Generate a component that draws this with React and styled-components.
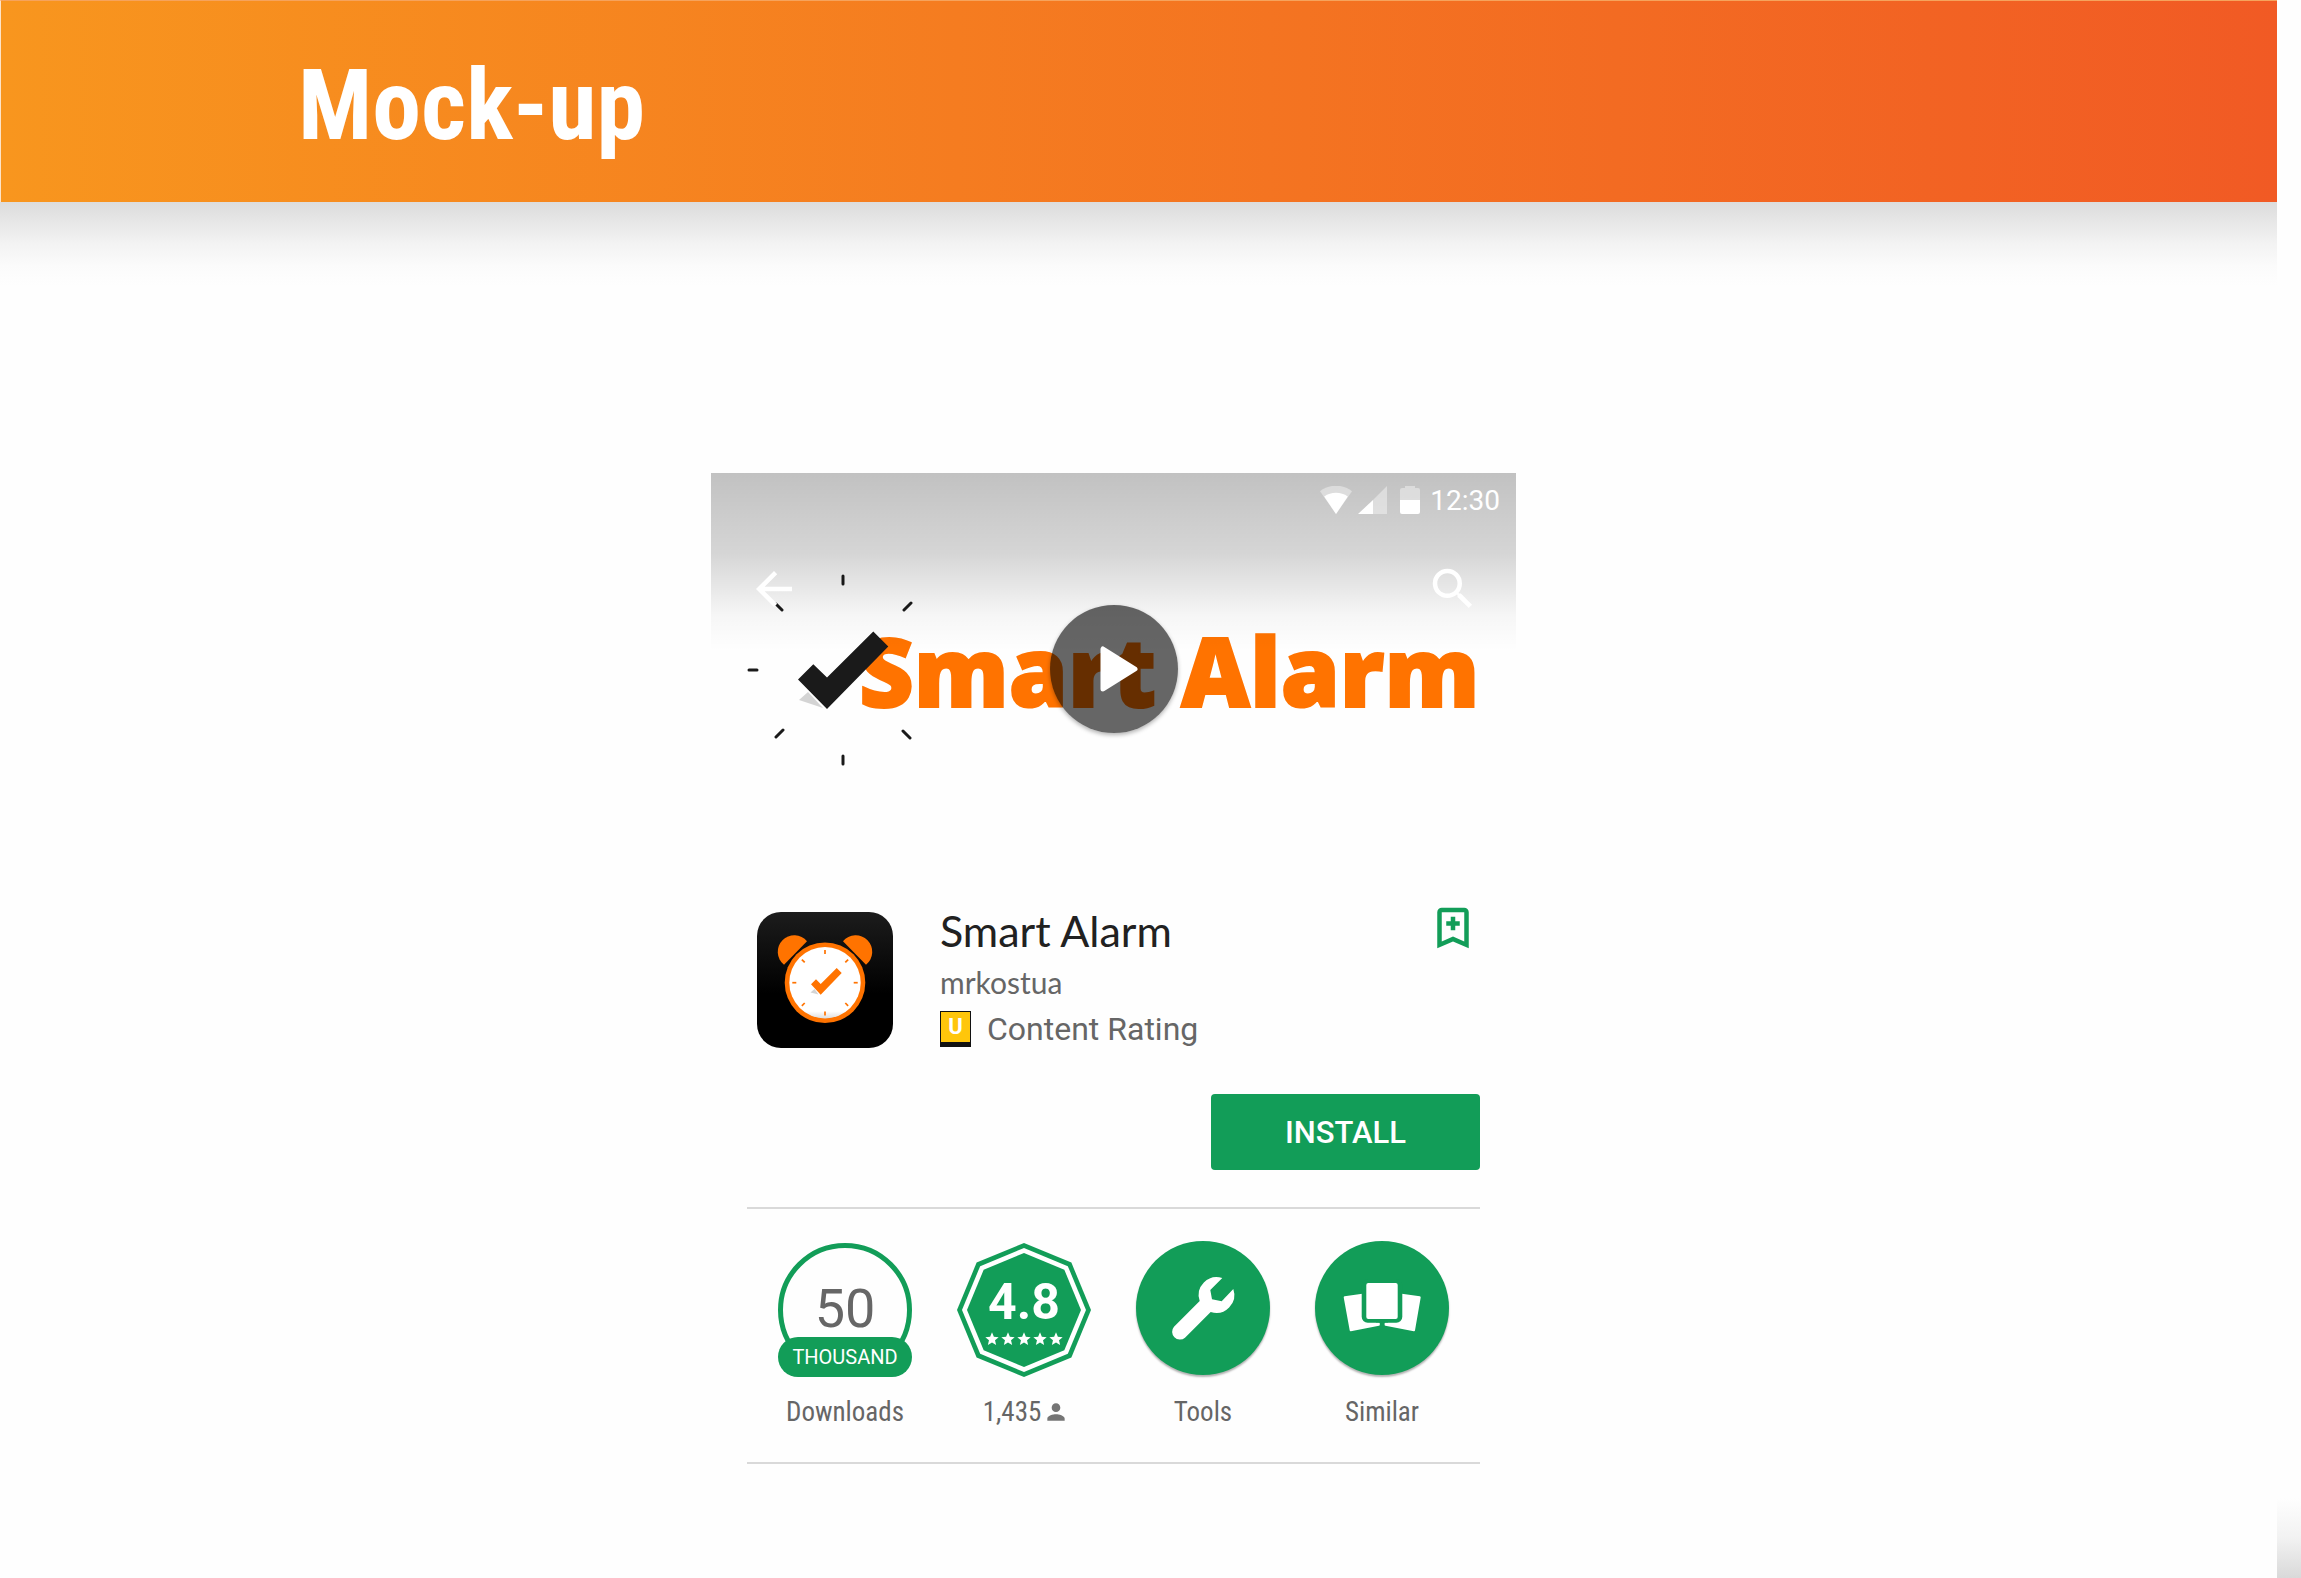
import styled, { createGlobalStyle } from "styled-components";
import { MdArrowBack, MdPerson, MdSearch, MdStar } from "react-icons/md";

const GREEN = "#129d58";
const ORANGE = "#ff7300";

function App() {
  return (
    <>
      <GlobalStyle />
      <Page>
        <Sheet>
          <Banner>
            <h1>Mock-up</h1>
          </Banner>
          <Shade />
          <Main>
            <Phone>
              <Hero />
              <Details />
              <Stats />
            </Phone>
          </Main>
        </Sheet>
        <Gutter />
      </Page>
    </>
  );
}

export default App;

function Hero() {
  return (
    <HeroWrap>
      <Brand>
        <ClockLogo />
        <Wordmark>Smart Alarm</Wordmark>
      </Brand>
      <Scrim>
        <StatusBar>
          <WifiIcon />
          <SignalIcon />
          <BatteryIcon />
          <time>12:30</time>
        </StatusBar>
        <Toolbar>
          <IconButton aria-label="Back">
            <MdArrowBack />
          </IconButton>
          <IconButton aria-label="Search">
            <MdSearch />
          </IconButton>
        </Toolbar>
      </Scrim>
      <PlayButton aria-label="Play">
        <svg width="38" height="46" viewBox="0 0 38 46">
          <path
            d="M3 3v40l32-20z"
            fill="#fff"
            stroke="#fff"
            strokeWidth="5"
            strokeLinejoin="round"
          />
        </svg>
      </PlayButton>
    </HeroWrap>
  );
}

function Details() {
  return (
    <DetailsWrap>
      <AppRow>
        <AppIcon />
        <Info>
          <h2>Smart Alarm</h2>
          <p>mrkostua</p>
          <Rating>
            <RatingBadge>U</RatingBadge>
            Content Rating
          </Rating>
        </Info>
        <IconButton aria-label="Add to wishlist" color={GREEN}>
          <svg viewBox="0 0 24 24">
            <path
              fillRule="evenodd"
              d="M7 3h10a2 2 0 0 1 2 2v16l-7-3-7 3V5a2 2 0 0 1 2-2zm0 2v13l5-2.2 5 2.2V5z"
            />
            <path d="M11 7h2v2h2v2h-2v2h-2v-2H9V9h2z" />
          </svg>
        </IconButton>
      </AppRow>
      <InstallButton>INSTALL</InstallButton>
    </DetailsWrap>
  );
}

function Stats() {
  return (
    <StatsRow>
      <Stat>
        <Downloads>
          <strong>50</strong>
          <span>THOUSAND</span>
        </Downloads>
        <Label>Downloads</Label>
      </Stat>
      <Stat>
        <Score>
          <Octagon />
          <div>
            <strong>4.8</strong>
            <Stars>
              {[1, 2, 3, 4, 5].map((n) => (
                <MdStar key={n} />
              ))}
            </Stars>
          </div>
        </Score>
        <Label>
          1,435 <MdPerson />
        </Label>
      </Stat>
      <Stat>
        <Disc>
          <svg viewBox="0 0 134 134">
            <path d="M86.3 37 74.3 49l1.7 9.3 9.7 2L97.3 48A18 18 0 0 1 74.7 71L49 96.7A7.8 7.8 0 0 1 38 85.7L63.7 60A18 18 0 0 1 86.3 37z" />
          </svg>
        </Disc>
        <Label>Tools</Label>
      </Stat>
      <Stat>
        <Disc>
          <svg viewBox="0 0 134 134">
            <g stroke="#fff" strokeWidth="2" strokeLinejoin="round">
              <path d="M29.7 56.3 60 52v30.5h3.8v1.3L35.7 89.3z" />
              <path d="M104.7 56.3 74 52v30.5h-3.4v1.3L99 89.3z" />
            </g>
            <rect x="46.7" y="38" width="40.6" height="43.7" rx="6" fill={GREEN} />
            <rect x="51.3" y="42" width="31.4" height="36" rx="2" />
          </svg>
        </Disc>
        <Label>Similar</Label>
      </Stat>
    </StatsRow>
  );
}

function ClockLogo() {
  return (
    <svg width="166" height="194" viewBox="-96 -97 166 194">
      <g stroke="#1a1a1a" strokeWidth="3" strokeLinecap="round">
        <path d="M0-94v8M0 86v8M-94 0h8M61-60l7-7M-61-60l-6-6M-60 60l-7 7M60 61l7 7" />
      </g>
      <path d="M-35 22l-9 8 24 8z" fill="#d4d4d4" />
      <path d="M-45 9.500l15.300-15.200L-16 7.500l46.300-46 15 15L-16 39z" fill="#1a1a1a" />
    </svg>
  );
}

function AppIcon() {
  return (
    <AppIconSvg viewBox="0 0 136 136" role="img" aria-label="Smart Alarm icon">
      <defs>
        <linearGradient id="tile" x1="0" y1="0" x2="0" y2="1">
          <stop offset="0" stopColor="#1c1c1c" />
          <stop offset=".6" stopColor="#000" />
        </linearGradient>
        <linearGradient id="face" x1="0" y1="0" x2="0" y2="1">
          <stop offset=".9" stopColor="#fff" />
          <stop offset="1" stopColor="#ddd" />
        </linearGradient>
      </defs>
      <rect width="136" height="136" rx="24" fill="url(#tile)" />
      <path d="M27 52.700A16.500 16.500 0 1 1 50 29.300z" fill={ORANGE} />
      <path d="M109 52.700A16.500 16.500 0 1 0 86 29.300z" fill={ORANGE} />
      <circle cx="68" cy="70.700" r="40.300" fill={ORANGE} />
      <circle cx="68" cy="70.700" r="35.700" fill="url(#face)" />
      <g stroke={ORANGE} strokeWidth="1.700">
        {[0, 45, 90, 135, 180, 225, 270, 315].map((deg) => (
          <path key={deg} d="M68 38v4" transform={`rotate(${deg} 68 70.700)`} />
        ))}
      </g>
      <path d="M57.500 77l-4 3.500 8 2z" fill="#d4d4d4" />
      <path d="M54 72.300l5-5 4.700 4.700 16-16 5 5-21 21.700z" fill={ORANGE} />
    </AppIconSvg>
  );
}

function WifiIcon() {
  return (
    <svg width="32" height="28" viewBox="0 0 32 28">
      <path d="M0 5.300a25.700 25.700 0 0 1 32 0L16 28z" opacity=".4" />
      <path d="M4.200 10.500a20.600 20.600 0 0 1 23.600 0L16 28z" />
    </svg>
  );
}

function SignalIcon() {
  return (
    <svg width="36" height="28" viewBox="0 0 36 28">
      <path d="M29 0v28H15V14z" opacity=".4" />
      <path d="M0 28h15V14z" />
    </svg>
  );
}

function BatteryIcon() {
  return (
    <svg width="20" height="28" viewBox="0 0 20 28">
      <path d="M0 14V4q0-2 2-2h3V0h10v2h3q2 0 2 2v10z" opacity=".4" />
      <path d="M0 14h20v12q0 2-2 2H2q-2 0-2-2z" />
    </svg>
  );
}

function Octagon() {
  return (
    <svg viewBox="-67 -67 134 134">
      {[
        [67, GREEN],
        [62, "#fff"],
        [57, GREEN],
      ].map(([r, fill]) => (
        <polygon key={r} points={octagon(r)} fill={fill} />
      ))}
    </svg>
  );
}

const octagon = (r) =>
  Array.from({ length: 8 }, (_, i) => {
    const a = (i * Math.PI) / 4;
    return `${r * Math.sin(a)},${-r * Math.cos(a)}`;
  }).join(" ");

const GlobalStyle = createGlobalStyle`
  * {
    box-sizing: border-box;
    margin: 0;
    padding: 0;
  }

  body {
    background: #fefefe;
    font-family: Roboto, "Noto Sans", sans-serif;
  }

  button {
    border: 0;
    background: none;
    font: inherit;
    cursor: pointer;
  }

  svg {
    display: block;
    flex: none;
  }
`;

const Page = styled.div`
  display: flex;
  min-height: 100vh;
`;

const Sheet = styled.div`
  flex: 1;
`;

const Gutter = styled.div`
  width: 24px;
  background: linear-gradient(to top, #d9d9d9, #f2f2f2 40px, #fefefe 80px);
`;

const Banner = styled.header`
  display: flex;
  align-items: center;
  height: 202px;
  padding-left: 297px;
  background: linear-gradient(to right, #f8961e, #f57c20 42%, #f15a24);
  border-top: 1px solid #f6a35c;
  border-left: 1px solid #fde3c8;
  color: #fff;

  h1 {
    padding-top: 9px;
    font-family: "Roboto Condensed", Roboto, sans-serif;
    font-size: 98px;
    font-weight: 700;
    line-height: 112px;
  }
`;

const Shade = styled.div`
  height: 84px;
  background: linear-gradient(#dcdcdc, #f3f3f3 50%, #fbfbfb 76%, #fefefe);
`;

const Main = styled.main`
  display: flex;
  justify-content: center;
  padding: 187px 50px 112px 0;
`;

const Phone = styled.article`
  width: 100%;
  max-width: 805px;
`;

/* the logo, the scrim and the play button share one grid cell */
const HeroWrap = styled.section`
  display: grid;
  min-height: 392px;

  > * {
    grid-area: 1 / 1;
  }
`;

const Brand = styled.div`
  display: flex;
  align-items: center;
  padding: 2px 0 0 36px;

  svg {
    z-index: 1;
  }
`;

const Wordmark = styled.div`
  margin-left: -54px;
  color: ${ORANGE};
  font-family: "Open Sans", sans-serif;
  font-size: 95px;
  font-weight: 800;
  line-height: 112px;
  white-space: nowrap;
  -webkit-text-stroke: 2px ${ORANGE};
  stroke-linejoin: round;
`;

const Scrim = styled.div`
  align-self: start;
  height: 178px;
  z-index: 2;
  background: linear-gradient(rgba(0, 0, 0, 0.24), rgba(0, 0, 0, 0.16) 45%, rgba(0, 0, 0, 0.03) 80%, transparent);
`;

const StatusBar = styled.div`
  display: flex;
  align-items: center;
  justify-content: flex-end;
  gap: 6px;
  height: 54px;
  padding-right: 16px;
  color: #fff;
  fill: #fff;
  font-size: 28px;

  time {
    padding-left: 4px;
  }
`;

const Toolbar = styled.div`
  display: flex;
  justify-content: space-between;
  padding: 35px 36px 0;
`;

const IconButton = styled.button`
  height: 54px;
  color: ${({ color }) => color || "#fff"};

  svg {
    width: 54px;
    height: 54px;
    fill: currentColor;
  }
`;

const PlayButton = styled.button`
  display: flex;
  align-items: center;
  justify-content: center;
  place-self: center;
  z-index: 3;
  width: 128px;
  height: 128px;
  padding-left: 10px;
  border-radius: 50%;
  background: rgba(0, 0, 0, 0.6);
  box-shadow: 0 2px 4px rgba(0, 0, 0, 0.3);
`;

const DetailsWrap = styled.section`
  display: flex;
  flex-direction: column;
  align-items: flex-end;
  gap: 46px;
  padding: 36px 36px 37px;
`;

const AppRow = styled.div`
  display: flex;
  align-items: flex-start;
  width: 100%;
`;

const AppIconSvg = styled.svg`
  width: 136px;
  height: 136px;
  margin: 11px 47px 0 10px;
`;

const Info = styled.div`
  flex: 1;
  padding-top: 2px;
  color: #666;

  h2 {
    color: #212121;
    font-family: Lato, sans-serif;
    font-size: 43px;
    font-weight: 400;
    line-height: 56px;
  }

  p {
    font-family: Lato, sans-serif;
    font-size: 30px;
    line-height: 46px;
  }
`;

const Rating = styled.div`
  display: flex;
  align-items: center;
  gap: 16px;
  margin-top: 6px;
  font-size: 32px;
  line-height: 36px;
`;

const RatingBadge = styled.span`
  width: 31px;
  height: 36px;
  border: 1px solid #111;
  border-bottom-width: 5px;
  background: #ffc60b;
  color: #fff;
  font-size: 22px;
  font-weight: 700;
  line-height: 30px;
  text-align: center;
`;

const InstallButton = styled.button`
  width: 269px;
  height: 76px;
  border-radius: 4px;
  background: ${GREEN};
  color: #fff;
  font-size: 31px;
  font-weight: 500;
`;

const StatsRow = styled.section`
  display: grid;
  grid-template-columns: repeat(4, 179px);
  justify-content: center;
  margin: 0 36px;
  padding: 32px 0 34px;
  border-top: 2px solid #d9d9d9;
  border-bottom: 2px solid #d9d9d9;
`;

const Stat = styled.div`
  display: flex;
  flex-direction: column;
  align-items: center;
  justify-content: flex-end;
  gap: 19px;
`;

const Label = styled.span`
  display: flex;
  align-items: center;
  gap: 2px;
  color: #666;
  font-family: "Roboto Condensed", Roboto, sans-serif;
  font-size: 27px;
  line-height: 32px;

  svg {
    width: 26px;
    height: 26px;
    margin-right: -4px;
    fill: #757575;
  }
`;

const Downloads = styled.div`
  display: flex;
  flex-direction: column;
  width: 134px;
  height: 134px;
  border: 5px solid ${GREEN};
  border-radius: 50%;
  text-align: center;

  strong {
    padding-top: 33px;
    color: #666;
    font-size: 54px;
    font-weight: 400;
    line-height: 56px;
  }

  span {
    margin: 0 -5px;
    border-radius: 20px;
    background: ${GREEN};
    color: #fff;
    font-size: 20px;
    line-height: 40px;
  }
`;

const Score = styled.div`
  display: grid;
  width: 134px;
  height: 134px;
  color: #fff;
  text-align: center;

  > * {
    grid-area: 1 / 1;
  }

  strong {
    display: block;
    padding-top: 33px;
    font-size: 50px;
    line-height: 52px;
  }
`;

const Stars = styled.div`
  display: flex;
  justify-content: center;
  padding-top: 3px;

  svg {
    width: 16px;
    height: 16px;
  }
`;

const Disc = styled.div`
  width: 134px;
  height: 134px;
  margin-bottom: 2px;
  border-radius: 50%;
  background: ${GREEN};
  box-shadow: 0 2px 2px rgba(0, 0, 0, 0.3);
  fill: #fff;
`;
